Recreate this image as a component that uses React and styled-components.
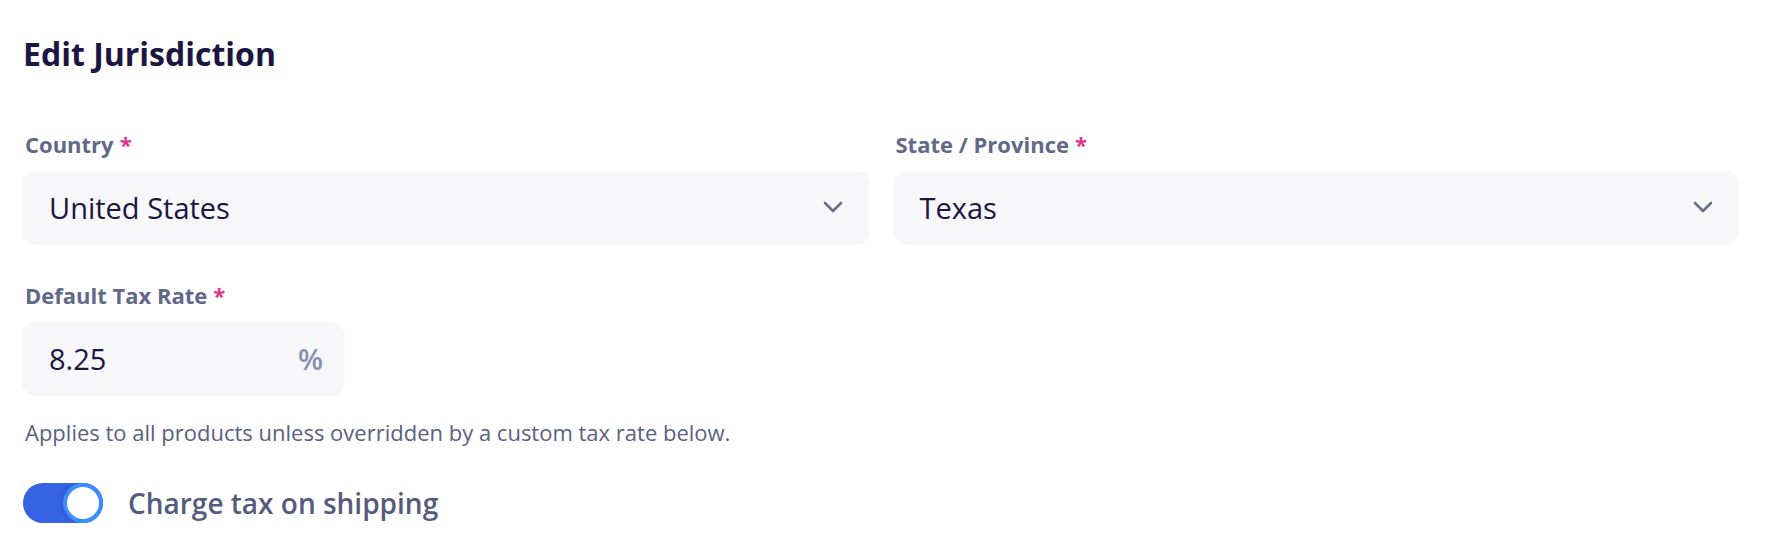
import React from 'react'
import styled, { createGlobalStyle } from 'styled-components'

const GlobalStyle = createGlobalStyle`
  html, body {
    margin: 0;
    padding: 0;
    background: #ffffff;
  }
  body {
    font-family: "Open Sans", "Noto Sans", sans-serif;
    -webkit-font-smoothing: antialiased;
  }
`

/* * * * * * * * * * * * * * * * * *
 *
 *  Css declarations
 *
 * * * * * * * * * * * * * * * * * */
const Page = styled.div`
  padding: 34px 23px 0;
  box-sizing: border-box;
`

const Form = styled.div`
  width: 1716px;
  display: flex;
  flex-direction: column;
`

const Title = styled.h2`
  margin: 0 0 55px;
  font-size: 32px;
  line-height: 40px;
  font-weight: 700;
  color: #1b1642;
`

const Row = styled.div`
  display: grid;
  grid-template-columns: 1fr 1fr;
  column-gap: 25px;
  margin-bottom: 37px;
`

const Field = styled.div`
  display: flex;
  flex-direction: column;
  gap: 12px;
`

const Label = styled.label`
  font-size: 22px;
  line-height: 30px;
  font-weight: 700;
  color: #636889;
  padding-left: 2px;
`

const Required = styled.span`
  color: #e0338c;
  margin-left: 6px;
`

const Box = styled.div`
  height: 72px;
  width: ${p => p.width || 'auto'};
  box-sizing: border-box;
  display: flex;
  align-items: center;
  justify-content: space-between;
  padding: 0 21px 0 26px;
  padding-right: ${p => p.select ? '26px' : '21px'};
  background: #f7f7fa;
  border-radius: 12px;
  box-shadow: 0 1px 2px rgba(20, 20, 60, 0.06);
`

const Value = styled.span`
  font-size: 29px;
  color: #1b1642;
`

const Suffix = styled.span`
  font-size: 29px;
  font-weight: 600;
  color: #8b8fae;
`

const Help = styled.p`
  margin: 23px 0 36px;
  padding-left: 2px;
  font-size: 22px;
  line-height: 30px;
  color: #5c6080;
`

const ToggleRow = styled.div`
  display: flex;
  align-items: center;
  gap: 25px;
`

const Track = styled.div`
  position: relative;
  width: 80px;
  height: 40px;
  border-radius: 20px;
  background: ${p => p.on ? '#3563e3' : '#d5d7e2'};
  flex-shrink: 0;
`

const Knob = styled.div`
  position: absolute;
  top: 0;
  ${p => p.on ? 'right: 0;' : 'left: 0;'}
  width: 40px;
  height: 40px;
  box-sizing: border-box;
  border-radius: 50%;
  background: #ffffff;
  border: 4px solid #3d8dfc;
  box-shadow: -2px 0 3px rgba(20, 40, 120, 0.18);
`

const ToggleLabel = styled.span`
  font-size: 28px;
  font-weight: 600;
  color: #565b7e;
`

const Chevron = () => (
  <svg width='20' height='12' viewBox='0 0 20 12'>
    <polyline
      points='2,2 10,10 18,2'
      fill='none'
      stroke='#6b7080'
      strokeWidth='2.6'
      strokeLinecap='round'
      strokeLinejoin='round' />
  </svg>
)

/* * * * * * * * * * * * * * * * * *
 *
 *  Displayed blocks
 *
 * * * * * * * * * * * * * * * * * */
const SelectField = ({ label, value }) => (
  <Field>
    <Label>{label}<Required>*</Required></Label>
    <Box select>
      <Value>{value}</Value>
      <Chevron />
    </Box>
  </Field>
)

export default function App () {
  return (
    <Page>
      <GlobalStyle />
      <Form>
        <Title>Edit Jurisdiction</Title>
        <Row>
          <SelectField label='Country' value='United States' />
          <SelectField label='State / Province' value='Texas' />
        </Row>
        <Field>
          <Label>Default Tax Rate<Required>*</Required></Label>
          <Box width='321px'>
            <Value>8.25</Value>
            <Suffix>%</Suffix>
          </Box>
        </Field>
        <Help>Applies to all products unless overridden by a custom tax rate below.</Help>
        <ToggleRow>
          <Track on>
            <Knob on />
          </Track>
          <ToggleLabel>Charge tax on shipping</ToggleLabel>
        </ToggleRow>
      </Form>
    </Page>
  )
}
